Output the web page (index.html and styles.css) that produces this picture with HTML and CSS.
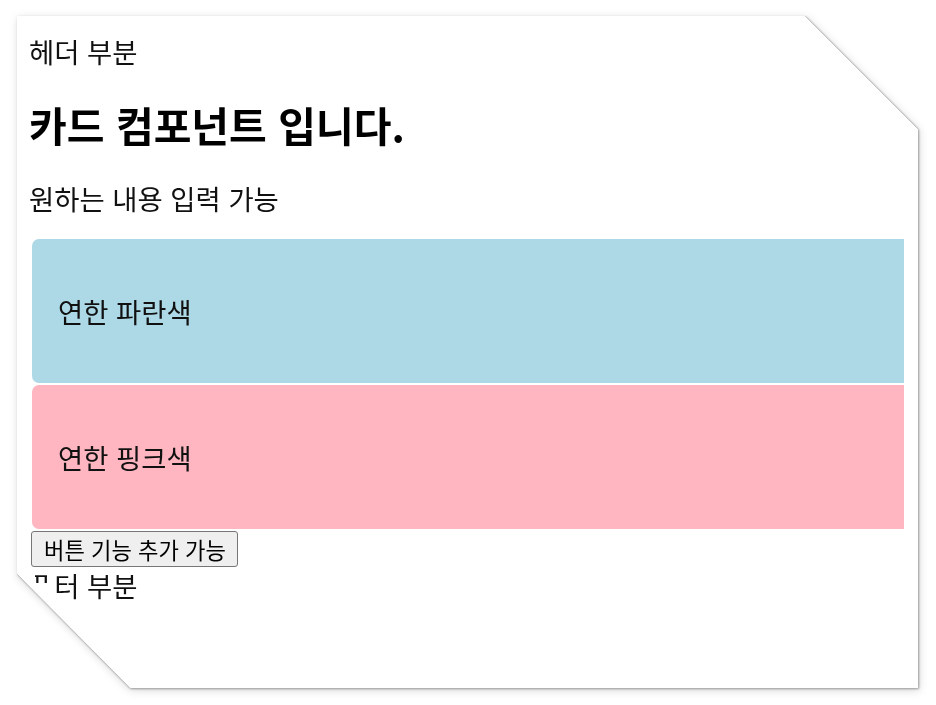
FILE: index.html
```html
<!DOCTYPE html>
<html lang="ko">
<head>
<meta charset="utf-8">
<title>카드 컴포넌트</title>
<link rel="stylesheet" href="styles.css">
</head>
<body>
<div class="stage">
  <div class="card-shadow">
    <div class="card">
      <div class="card-header">헤더 부분</div>
      <h2 class="card-title">카드 컴포넌트 입니다.</h2>
      <p class="card-text">원하는 내용 입력 가능</p>
      <div class="box box-blue">연한 파란색</div>
      <div class="box box-pink">연한 핑크색</div>
      <button class="card-button" type="button">버튼 기능 추가 가능</button>
      <div class="card-footer"><span class="cut-glyph">푸</span>터 부분</div>
    </div>
  </div>
</div>
</body>
</html>
```
FILE: styles.css
```css
html, body {
  margin: 0;
  padding: 0;
  background: #ffffff;
}

body {
  font-family: "Noto Sans CJK KR", "Noto Sans", sans-serif;
  color: #111111;
}

.stage {
  padding: 16px 0 12px 17px;
}

.card-shadow {
  width: 901px;
  height: 672px;
  filter: drop-shadow(0 0 0.6px rgba(0, 0, 0, 0.55)) drop-shadow(1px 1px 1px rgba(0, 0, 0, 0.35)) drop-shadow(1px 2px 4px rgba(0, 0, 0, 0.15));
}

.card {
  width: 100%;
  height: 100%;
  box-sizing: border-box;
  background: #ffffff;
  padding: 0 14px 0 12px;
  display: flex;
  flex-direction: column;
  align-items: flex-start;
  clip-path: polygon(0 0, 788px 0, 100% 113px, 100% 100%, 113px 100%, 0 558px);
}

.card-header {
  margin-top: 19px;
  font-size: 27.4px;
  line-height: 32px;
}

.card-title {
  margin: 35px 0 0 0;
  font-size: 41px;
  line-height: 44px;
  font-weight: 700;
  color: #000000;
}

.card-text {
  margin: 36px 0 0 0;
  font-size: 27.4px;
  line-height: 32px;
}

.box {
  box-sizing: border-box;
  width: 872px;
  height: 144px;
  padding-left: 26px;
  display: flex;
  align-items: center;
  font-size: 27.4px;
  border-radius: 7px 0 0 7px;
  margin-left: 3px;
}

.box-blue {
  margin-top: 25px;
  background: #add8e6;
}

.box-pink {
  margin-top: 2px;
  background: #ffb6c1;
}

.card-button {
  margin-top: 2px;
  margin-left: 2px;
  height: 36px;
  padding: 0 11px 0 12px;
  font-family: "Noto Sans CJK KR", "Noto Sans", sans-serif;
  font-size: 22.2px;
  line-height: 30px;
  color: #000000;
  background: #efefef;
  border: 1px solid #767676;
  border-radius: 3px;
}

.card-footer {
  margin-top: 2px;
  font-size: 27.4px;
  line-height: 32px;
}

.cut-glyph {
  display: inline-block;
  clip-path: inset(0 30% 58% 27%);
}
```
